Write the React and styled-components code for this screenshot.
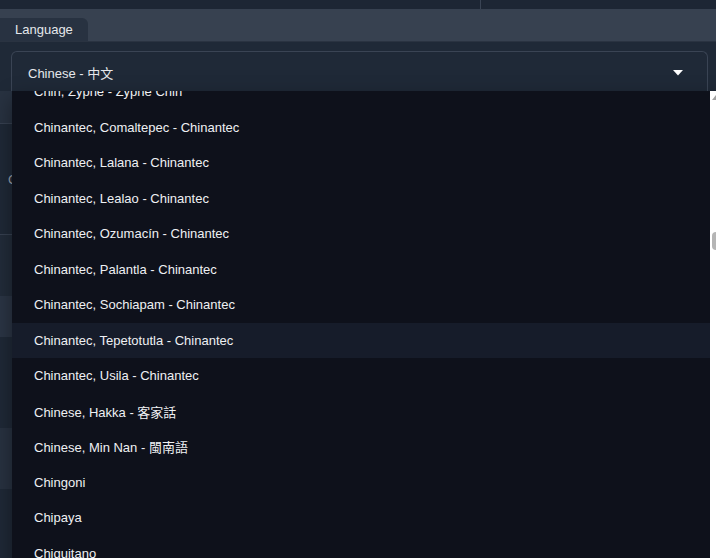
import React from "react";
import styled, { createGlobalStyle } from "styled-components";

const GlobalStyle = createGlobalStyle`
  html, body {
    margin: 0;
    padding: 0;
    background: #1f2937;
    overflow: hidden;
  }
  body {
    font-family: "Liberation Sans", "Noto Sans CJK SC", sans-serif;
    color: #e5e7eb;
  }
`;

const Page = styled.div`
  width: 716px;
  height: 558px;
  position: relative;
  overflow: hidden;
  background: #1f2937;
`;

const TopStrip = styled.div`
  height: 9px;
  display: grid;
  grid-template-columns: 481px 1fr;
  background: #1d2634;
`;

const TopCell = styled.div`
  border-right: ${p => (p.$divider ? "1px solid #3a4454" : "none")};
`;

const TabBand = styled.div`
  height: 32px;
  background: #374150;
  display: flex;
  align-items: flex-end;
  border-bottom: 1px solid #2a3341;
`;

const Tab = styled.div`
  width: 88px;
  height: 23px;
  background: #283241;
  border-top-right-radius: 6px;
  display: flex;
  align-items: center;
  padding-left: 15px;
  box-sizing: border-box;
  font-size: 13px;
  color: #e5e7eb;
`;

const Panel = styled.div`
  padding: 9px 8px 0 11px;
  position: relative;
`;

const SelectBox = styled.div`
  height: 40px;
  box-sizing: border-box;
  border: 1.5px solid #3a4454;
  border-bottom: none;
  border-radius: 6px 6px 0 0;
  background: #1f2937;
  display: flex;
  align-items: center;
  justify-content: space-between;
  padding: 2px 24px 0 16px;
  font-size: 13px;
  color: #e5e7eb;
`;

const Caret = styled.svg`
  width: 10px;
  height: 6px;
  display: block;
`;

const Behind = styled.div`
  display: flex;
  flex-direction: column;
  margin-left: -11px;
`;

const BehindRow = styled.div`
  height: ${p => p.$h}px;
  background: ${p => p.$bg || "#1f2937"};
  border-bottom: 1px solid ${p => p.$line || "transparent"};
  border-radius: ${p => (p.$round ? "0 8px 8px 0" : "0")};
  font-size: 13px;
  color: #9ca3af;
  padding-left: 8px;
  display: flex;
  align-items: center;
`;

const Dropdown = styled.div`
  position: absolute;
  left: 12px;
  top: 91px;
  width: 716px;
  height: 480px;
  background: #0e111b;
  display: flex;
  overflow: hidden;
  box-shadow: 0 8px 20px rgba(0, 0, 0, 0.4);
`;

const Options = styled.ul`
  list-style: none;
  margin: -17px 0 0 0;
  padding: 0;
  width: 698px;
  flex: none;
`;

const Option = styled.li`
  height: 35.5px;
  display: flex;
  align-items: center;
  padding-left: 22px;
  font-size: 13px;
  color: #eef0f3;
  background: ${p => (p.$active ? "#161c2a" : "transparent")};
  white-space: nowrap;
`;

const Scrollbar = styled.div`
  width: 17px;
  flex: none;
  background: #ffffff;
  position: relative;
`;

const ScrollArrow = styled.div`
  position: absolute;
  top: 4px;
  left: 2px;
  width: 0;
  height: 0;
  border-left: 4px solid transparent;
  border-right: 4px solid transparent;
  border-bottom: 5px solid #a3a3a3;
`;

const ScrollThumb = styled.div`
  position: absolute;
  top: 141px;
  left: 2px;
  width: 8px;
  height: 18px;
  border-radius: 4px;
  background: #b5b5b5;
`;

const options = [
  "Chin, Zyphe - Zyphe Chin",
  "Chinantec, Comaltepec - Chinantec",
  "Chinantec, Lalana - Chinantec",
  "Chinantec, Lealao - Chinantec",
  "Chinantec, Ozumacín - Chinantec",
  "Chinantec, Palantla - Chinantec",
  "Chinantec, Sochiapam - Chinantec",
  "Chinantec, Tepetotutla - Chinantec",
  "Chinantec, Usila - Chinantec",
  "Chinese, Hakka - 客家話",
  "Chinese, Min Nan - 閩南語",
  "Chingoni",
  "Chipaya",
  "Chiquitano",
];

export default function App() {
  return (
    <Page>
      <GlobalStyle />
      <TopStrip>
        <TopCell $divider />
        <TopCell />
      </TopStrip>
      <TabBand>
        <Tab>Language</Tab>
      </TabBand>
      <Panel>
        <SelectBox>
          <span>Chinese - 中文</span>
          <Caret viewBox="0 0 10 6">
            <path d="M0 0 L10 0 L5 5.5 Z" fill="#ffffff" />
          </Caret>
        </SelectBox>
        <Behind>
          <BehindRow $h={32} $bg="#283241" $round $line="#374151" />
          <BehindRow $h={110} $line="#374151">C</BehindRow>
          <BehindRow $h={60} $bg="#222c3a" />
          <BehindRow $h={40} $bg="#2b3545" $round />
          <BehindRow $h={90} />
          <BehindRow $h={60} $bg="#283241" $round />
        </Behind>
      </Panel>
      <Dropdown>
        <Options>
          {options.map((o, i) => (
            <Option key={o} $active={i === 7}>
              {o}
            </Option>
          ))}
        </Options>
        <Scrollbar>
          <ScrollArrow />
          <ScrollThumb />
        </Scrollbar>
      </Dropdown>
    </Page>
  );
}
